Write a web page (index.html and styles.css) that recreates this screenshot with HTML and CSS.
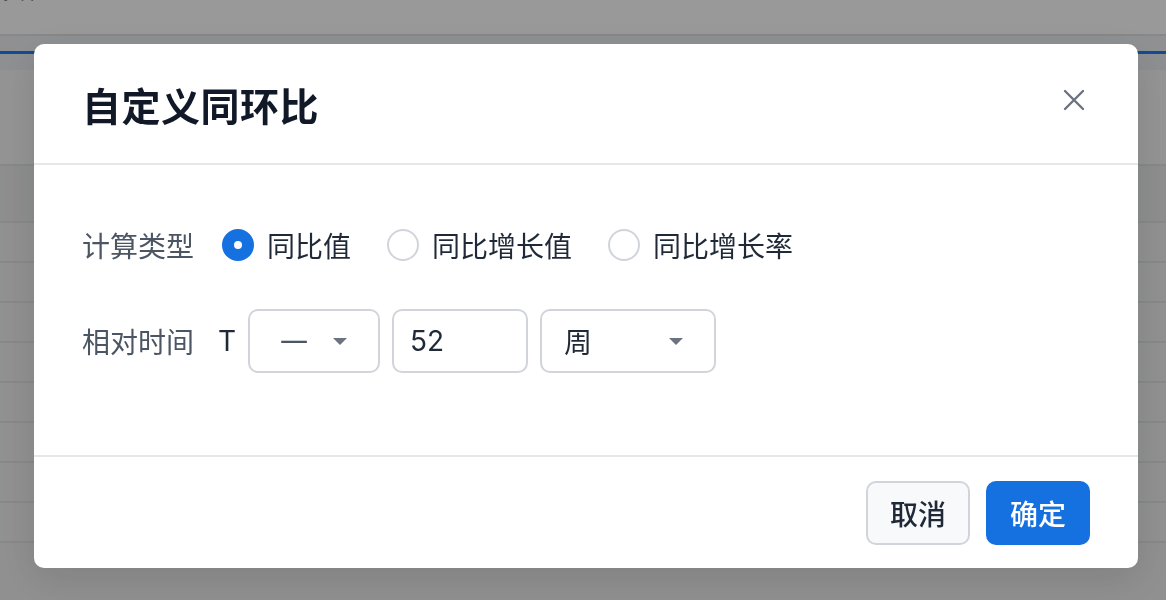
FILE: index.html
```html
<!DOCTYPE html>
<html lang="zh-CN">
<head>
<meta charset="utf-8">
<title>自定义同环比</title>
<link rel="stylesheet" href="styles.css">
</head>
<body>
<div class="page">
  <div class="topbar"><span class="topbar-text">条件</span></div>
  <div class="tabs"><div class="tab-line"></div></div>
  <div class="toolbar"></div>
  <div class="table">
    <div class="thead"></div>
    <div class="trow"></div>
    <div class="trow"></div>
    <div class="trow"></div>
    <div class="trow"></div>
    <div class="trow"></div>
    <div class="trow"></div>
    <div class="trow"></div>
    <div class="trow"></div>
  </div>
</div>
<div class="overlay"></div>
<div class="modal">
  <div class="modal-header">
    <h2 class="modal-title">自定义同环比</h2>
    <button class="close-btn" aria-label="关闭">
      <svg width="22" height="22" viewBox="0 0 22 22"><path d="M2 2L20 20M20 2L2 20" stroke="#6b7280" stroke-width="2.4" stroke-linecap="round"/></svg>
    </button>
  </div>
  <div class="modal-body">
    <div class="form-row">
      <span class="form-label">计算类型</span>
      <div class="radio-group">
        <label class="radio"><span class="radio-dot checked"></span><span class="radio-text">同比值</span></label>
        <label class="radio"><span class="radio-dot"></span><span class="radio-text">同比增长值</span></label>
        <label class="radio"><span class="radio-dot"></span><span class="radio-text">同比增长率</span></label>
      </div>
    </div>
    <div class="form-row">
      <span class="form-label">相对时间</span>
      <span class="t-mark">T</span>
      <div class="select select-sign"><span class="select-value">一</span><span class="caret"></span></div>
      <div class="input">52</div>
      <div class="select select-unit"><span class="select-value">周</span><span class="caret"></span></div>
    </div>
  </div>
  <div class="modal-footer">
    <button class="btn btn-default">取消</button>
    <button class="btn btn-primary">确定</button>
  </div>
</div>
</body>
</html>
```
FILE: styles.css
```css
* { box-sizing: border-box; }
html, body { margin: 0; padding: 0; }
body {
  width: 1166px;
  height: 600px;
  overflow: hidden;
  font-family: "Inter", "Noto Sans CJK SC", sans-serif;
  background: #f3f4f6;
}
.page {
  height: 600px;
  background: #f0f0f0;
  display: flex;
  flex-direction: column;
}
.topbar {
  height: 36px;
  background: #ffffff;
  border-bottom: 2px solid #e2e3e5;
  overflow: hidden;
}
.topbar-text {
  display: block;
  margin-top: -27px;
  margin-left: -4px;
  font-size: 22px;
  line-height: 30px;
  color: #111;
  font-family: "Noto Sans CJK SC", sans-serif;
}
.tabs {
  height: 18px;
  background: #f0f1f3;
  display: flex;
  flex-direction: column;
  justify-content: flex-end;
}
.tab-line { height: 3px; background: #1c7ef8; }
.toolbar {
  height: 110px;
  background: #f6f6f6;
  border-top: 16px solid #eceef0;
}
.table { display: flex; flex-direction: column; }
.thead {
  height: 59px;
  background: #eceded;
  border-top: 2px solid #e2e3e5;
  border-bottom: 2px solid #e2e3e5;
}
.trow {
  height: 40px;
  background: #f1f2f2;
  border-bottom: 2px solid #e2e3e5;
}
.overlay {
  position: fixed;
  inset: 0;
  background: rgba(0, 0, 0, 0.4);
}
.modal {
  position: fixed;
  left: 34px;
  top: 44px;
  width: 1104px;
  height: 524px;
  background: #ffffff;
  border-radius: 10px;
  box-shadow: 0 10px 40px rgba(0, 0, 0, 0.12);
  display: flex;
  flex-direction: column;
  font-family: "Noto Sans CJK SC", sans-serif;
}
.modal-header {
  height: 121px;
  border-bottom: 2px solid #e5e7eb;
  display: flex;
  align-items: center;
  justify-content: space-between;
  padding: 0 52px 0 48px;
}
.modal-title {
  margin: 0;
  font-size: 39px;
  font-weight: 700;
  color: #111827;
  letter-spacing: 0.5px;
}
.close-btn {
  border: 0;
  background: none;
  padding: 0;
  width: 24px;
  height: 24px;
  margin-top: -8px;
  display: flex;
  align-items: center;
  justify-content: center;
}
.modal-body {
  padding: 48px 50px 48px 48px;
  flex: 1;
}
.form-row {
  height: 64px;
  margin-bottom: 32px;
  display: flex;
  align-items: center;
}
.form-label {
  font-size: 28px;
  color: #4b5563;
  width: 140px;
}
.radio-group { display: flex; align-items: center; gap: 36px; }
.radio { display: flex; align-items: center; gap: 13px; }
.radio-dot {
  width: 32px;
  height: 32px;
  border-radius: 50%;
  border: 2px solid #d1d5db;
  background: #fff;
  display: block;
}
.radio-dot.checked {
  border: 12px solid #1570e0;
  background: #fff;
}
.radio-text { font-size: 28px; color: #1f2937; }
.t-mark {
  font-size: 28px;
  color: #1f2937;
  font-family: "Inter", sans-serif;
  margin-left: -4px;
  margin-right: 12px;
}
.select, .input {
  height: 64px;
  border: 2px solid #d1d5db;
  border-radius: 10px;
  display: flex;
  align-items: center;
  font-size: 28px;
  color: #1f2937;
  background: #fff;
}
.select { justify-content: space-between; padding: 0 31px 0 22px; }
.select-sign { width: 132px; padding-left: 30px; }
.select-sign .select-value { color: #4b5563; }
.select-unit { width: 176px; margin-left: 12px; }
.input { width: 136px; margin-left: 12px; padding-left: 16px; font-family: "Inter", sans-serif; }
.caret {
  width: 0;
  height: 0;
  border-left: 7px solid transparent;
  border-right: 7px solid transparent;
  border-top: 7px solid #6b7280;
}
.modal-footer {
  height: 113px;
  border-top: 2px solid #e5e7eb;
  display: flex;
  align-items: center;
  justify-content: flex-end;
  gap: 16px;
  padding: 0 48px;
}
.btn {
  width: 104px;
  height: 64px;
  border-radius: 10px;
  font-size: 28px;
  font-family: "Noto Sans CJK SC", sans-serif;
  font-weight: 500;
  padding: 0;
}
.btn-default {
  background: #f8f9fb;
  border: 2px solid #d1d5db;
  color: #1f2937;
}
.btn-primary {
  background: #1570e0;
  border: 2px solid #1570e0;
  color: #fff;
}
```
